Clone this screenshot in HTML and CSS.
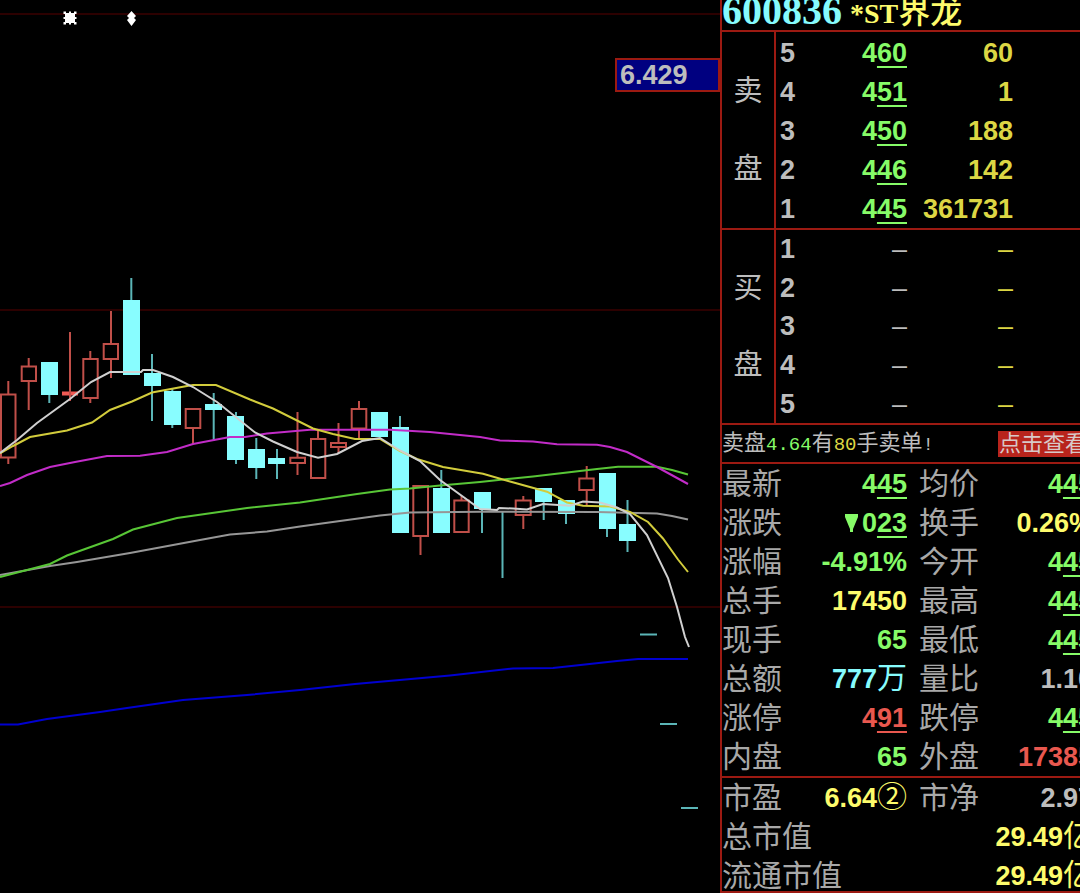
FILE: index.html
```html
<!DOCTYPE html>
<html lang="zh-CN">
<head>
<meta charset="utf-8">
<title>600836 *ST界龙</title>
<link rel="stylesheet" href="styles.css">
</head>
<body>
<main class="terminal">
  <section class="chart" aria-label="K线图">
    <svg class="plot" viewBox="0 0 720 893" preserveAspectRatio="none">
      <path class="grid" d="M0 14H720M0 310H720M0 607H720"/>
      <g class="mark">
        <rect x="65" y="13" width="10" height="10"/>
        <path d="M63.500 11.500h2.500v2.500h-2.500zM74 11.500h2.500v2.500h-2.500zM63.500 22h2.500v2.500h-2.500zM74 22h2.500v2.500h-2.500zM69 11.500h2v13h-2zM63.500 17h13v2h-13z"/>
        <path d="M131.500 11l4.500 5-2 2 2 2-4.500 6-4.500-6 2-2-2-2z"/>
      </g>
      <g class="up">
        <path d="M1 394.500H15.500V457.500H1zM8.300 381V394M8.300 458V464"/>
        <path d="M21.700 366.500H36V381H21.700zM28.700 358V366M28.700 382V410"/>
        <path class="flat" d="M62 393.500H78"/><path d="M70 332V401"/>
        <path d="M83.300 359H97.700V398H83.300zM90.300 351V358M90.300 399V403"/>
        <path d="M103.700 344H118V359H103.700zM111 311V343M111 360V378"/>
        <path d="M185.700 409H200.300V428H185.700zM193 429V444"/>
        <path d="M290.300 457.700H305V463H290.300zM297.500 412V457M297.500 464V475"/>
        <path d="M311 439H325.300V478H311zM318 430V438"/>
        <path d="M331 443H346V447H331zM338.500 423V442M338.500 448V453"/>
        <path d="M351.700 409H366.300V428.500H351.700zM359 401V408M359 429V438"/>
        <path d="M413.300 486H428V536H413.300zM420.500 537V555"/>
        <path d="M454.300 500.500H468.700V532H454.300zM461.500 496V500"/>
        <path d="M515.700 500.500H530.700V515H515.700zM523.300 496V500M523.300 516V529"/>
        <path d="M579.300 478.500H593.700V490H579.300zM586.700 466V478M586.700 491V505"/>
      </g>
      <path class="wick" d="M49.300 390V403M131.300 278V310M152 354V421M172.300 388V428M213.700 393V441M236 412V464M256.300 438V479M277 449V479M400 416V430M441.300 470V490M482 505V533M502.500 512V578M543.700 500V520M566 510V524M607 525V537M627.500 500V552M640 634.500H657M660 724H677M681 808H698"/>
      <path class="down" d="M41 362h17v33h-17zM123 300h17v75h-17zM144 373h17v13h-17zM164 391h17v34h-17zM205 404h17v6h-17zM227 416h17v44h-17zM248 449h17v19h-17zM268 458h17v6h-17zM371 412h17v25h-17zM392 427h17v106h-17zM433 488h17v45h-17zM474 492h17v17h-17zM535 488h17v14h-17zM558 500h17v14h-17zM599 473h17v56h-17zM619 524h17v17h-17z"/>
      <g class="average">
        <polyline class="ma-blue" points="0,724.500 18,724.500 47,719 100,712 127,708 183,700 247,695 300,690 355,684 450,675.500 513,668.500 553,668 617,661 638,659 688,659"/>
        <polyline class="ma-gray" points="0,575 50,566 77,562 130,553 200,540 230,534.500 267,531.500 300,526.500 380,515.500 410,512.500 480,511.700 597,512 657,513.500 672,516 688,519.500"/>
        <polyline class="ma-green" points="0,577 50,564 67,555.500 113,539 133,529.500 177,518 247,508 300,502.500 357,494 390,489.500 410,488.500 440,485.500 480,482 513,478.500 533,476.500 597,469 618,466.700 657,466.700 672,470 688,474.500"/>
        <polyline class="ma-magenta" points="0,486 10,483 27,475 50,467 75,462 107,456 140,455.700 167,452 193,444 210,440.700 230,437 245,437 267,433.500 310,429.700 390,429.700 430,432 480,437 500,440.500 533,441.500 557,444.300 597,444.700 610,447 627,452 657,467 688,484"/>
        <polyline class="ma-yellow" points="0,453.500 13,446 30,437 67,430.500 92,422.500 110,410 132,401.500 152,392.500 187,386 193,385 216,385 250,399.500 273,408.500 313,428.500 333,434 355,439 380,439 400,451 417,459 443,467 483,473.700 510,481.500 547,491.700 567,502.500 583,505.700 610,506.500 630,512 648,522 663,538.500 678,559.500 688,572"/>
        <polyline class="ma-white" points="0,453 17,440 37,423 70,399 91,382 110,372 141,372 143,370 153,370 173,377 193,387 217,402 255,432.500 273,441.500 297,452 318,457.700 337,454 362,441 380,438 400,450.500 420,461 440,480 480,509 497,510 499,508 513,508.500 527,509.500 543,504 570,505.700 583,501.500 600,502.500 617,507.500 630,514 647,535 668,578 677,607 685,637 689,647"/>
      </g>
    </svg>
    <output class="price-tag">6.429</output>
  </section>

  <aside class="quote">
    <h1 class="title"><span class="code">600836</span><span class="name"><span class="latin">*ST</span>界龙</span></h1>

    <section class="book asks" aria-label="卖盘">
      <div class="side"><span class="first">卖</span><span class="second">盘</span></div>
      <table class="levels">
        <tbody>
          <tr><th scope="row">5</th><td class="price green">4<u>60</u></td><td class="volume">60</td></tr>
          <tr><th scope="row">4</th><td class="price green">4<u>51</u></td><td class="volume">1</td></tr>
          <tr><th scope="row">3</th><td class="price green">4<u>50</u></td><td class="volume">188</td></tr>
          <tr><th scope="row">2</th><td class="price green">4<u>46</u></td><td class="volume">142</td></tr>
          <tr><th scope="row">1</th><td class="price green">4<u>45</u></td><td class="volume">361731</td></tr>
        </tbody>
      </table>
    </section>

    <section class="book" aria-label="买盘">
      <div class="side"><span class="first">买</span><span class="second">盘</span></div>
      <table class="levels empty">
        <tbody>
          <tr><th scope="row">1</th><td class="price">–</td><td class="volume">–</td></tr>
          <tr><th scope="row">2</th><td class="price">–</td><td class="volume">–</td></tr>
          <tr><th scope="row">3</th><td class="price">–</td><td class="volume">–</td></tr>
          <tr><th scope="row">4</th><td class="price">–</td><td class="volume">–</td></tr>
          <tr><th scope="row">5</th><td class="price">–</td><td class="volume">–</td></tr>
        </tbody>
      </table>
    </section>

    <section class="notice">
      <p class="message">卖盘<span class="mono green">4.64</span>有<span class="mono amber">80</span>手卖单<span class="mono">!</span></p>
      <a class="view" href="#orders">点击查看</a>
    </section>

    <dl class="stats">
      <div class="stat"><dt>最新</dt><dd class="green">4<u>45</u></dd></div>
      <div class="stat"><dt>均价</dt><dd class="green">4<u>45</u></dd></div>
      <div class="stat"><dt>涨跌</dt><dd class="green"><svg class="fall" viewBox="0 0 13 18"><path d="M0 0H13V3L8 15V18H5V15L0 3z"/></svg>0<u>23</u></dd></div>
      <div class="stat"><dt>换手</dt><dd class="yellow">0.26%</dd></div>
      <div class="stat"><dt>涨幅</dt><dd class="green">-4.91%</dd></div>
      <div class="stat"><dt>今开</dt><dd class="green">4<u>45</u></dd></div>
      <div class="stat"><dt>总手</dt><dd class="yellow">17450</dd></div>
      <div class="stat"><dt>最高</dt><dd class="green">4<u>45</u></dd></div>
      <div class="stat"><dt>现手</dt><dd class="green">65</dd></div>
      <div class="stat"><dt>最低</dt><dd class="green">4<u>45</u></dd></div>
      <div class="stat"><dt>总额</dt><dd class="cyan">777<span class="unit">万</span></dd></div>
      <div class="stat"><dt>量比</dt><dd>1.10</dd></div>
      <div class="stat"><dt>涨停</dt><dd class="red">4<u>91</u></dd></div>
      <div class="stat"><dt>跌停</dt><dd class="green">4<u>45</u></dd></div>
      <div class="stat"><dt>内盘</dt><dd class="green">65</dd></div>
      <div class="stat"><dt>外盘</dt><dd class="red">17385</dd></div>
    </dl>

    <dl class="stats valuation">
      <div class="stat"><dt>市盈</dt><dd class="yellow">6.64<span class="unit">②</span></dd></div>
      <div class="stat"><dt>市净</dt><dd>2.97</dd></div>
      <div class="stat wide"><dt>总市值</dt><dd class="yellow">29.49<span class="unit">亿</span></dd></div>
      <div class="stat wide"><dt>流通市值</dt><dd class="yellow">29.49<span class="unit">亿</span></dd></div>
    </dl>
  </aside>
</main>
</body>
</html>
```

FILE: styles.css
```css
:root {
  --line: #9c1a12;
  --silver: #bdbdbd;
  --green: #86fb68;
  --yellow: #fdfb6c;
  --amber: #dcd644;
  --cyan: #86fbfd;
  --red: #e9584f;
  --text: "Liberation Sans", "Noto Sans CJK SC", sans-serif;
}

* {
  box-sizing: border-box;
}

body {
  margin: 0;
  background: #000;
  color: var(--silver);
  font: bold 27px/30px var(--text);
  overflow: hidden;
}

.terminal {
  display: grid;
  grid-template-columns: 2fr 1fr;
  height: 100vh;
}

/* Chart */
.chart {
  position: relative;
  min-width: 0;
}

.plot {
  display: block;
  width: 100%;
  height: 100vh;
}

.plot path,
.plot polyline {
  fill: none;
  stroke-width: 2;
}

.plot .grid { stroke: #2c0000; }
.plot .mark rect,
.plot .mark path { fill: #fff; }
.plot .up path { stroke: #c04f49; }
.plot .up .flat { stroke: #f05a54; stroke-width: 4; }
.plot .wick { stroke: #5bb5b7; }
.plot .down { fill: #88fdff; }
.ma-blue { stroke: #0000d0; }
.ma-gray { stroke: #969696; }
.ma-green { stroke: #58c636; }
.ma-magenta { stroke: #c22cc8; }
.ma-yellow { stroke: #d2cc3c; }
.ma-white { stroke: #d0d0d0; }

.price-tag {
  position: absolute;
  top: 58px;
  right: 0;
  width: 105px;
  padding: 0 3px;
  border: 2px solid var(--line);
  background: #000080;
}

/* Quote panel */
.quote {
  display: grid;
  grid-template-rows:
    minmax(0, 32fr) minmax(0, 198fr) minmax(0, 195fr)
    minmax(0, 39fr) minmax(0, 314fr) minmax(0, 115fr);
  min-width: 0;
  height: 100vh;
  overflow: hidden;
  border-left: 2px solid var(--line);
}

.quote > * {
  margin: 0;
  border-bottom: 2px solid var(--line);
}

.title {
  display: flex;
  align-items: flex-start;
  gap: 8px;
  white-space: nowrap;
}

.code {
  color: var(--cyan);
  font: bold 40px/22px "Liberation Serif", serif;
}

.name {
  color: var(--yellow);
  font: 500 32px/24px var(--text);
}

.latin {
  font: bold 28px/24px "Liberation Serif", serif;
}

.book {
  display: grid;
  grid-template-columns: 54px 1fr;
}

.asks .levels {
  margin-top: 1px;
}

.side {
  display: grid;
  grid-template-rows: repeat(5, 1fr);
  place-items: center;
  border-right: 2px solid var(--line);
  font: 400 29px/30px var(--text);
}

.first { grid-row: 2; }
.second { grid-row: 4; }

.levels {
  width: 237px;
  height: 100%;
  table-layout: fixed;
  border-collapse: collapse;
}

.levels th,
.levels td {
  padding: 0;
  text-align: right;
}

.levels th {
  width: 30px;
  padding-left: 4px;
  text-align: left;
}

.price { width: 101px; }
.volume { color: var(--amber); }
.empty td { font-weight: normal; }

u {
  text-decoration: underline 2px;
  text-underline-offset: 4px;
  text-decoration-skip-ink: none;
}

.notice {
  display: grid;
  grid-template-columns: 276px auto;
  align-items: center;
  font: 400 22px/26px var(--text);
  white-space: nowrap;
}

.message {
  margin: 0;
}

.mono {
  font: 19px/26px "Liberation Mono", monospace;
}

.view {
  padding: 0 1px;
  background: #b8241c;
  color: #d8c8c8;
  text-decoration: none;
}

.stats {
  display: grid;
  grid-template-columns: 185px 174px;
  grid-auto-rows: 1fr;
  column-gap: 12px;
}

.valuation {
  grid-auto-rows: 39px;
}

.stat {
  display: flex;
  align-items: center;
  justify-content: space-between;
  white-space: nowrap;
}

.wide {
  grid-column: 1 / -1;
}

.stat dt,
.unit {
  font: 400 30px/30px var(--text);
}

.stat dt {
  color: #a8a8a8;
}

.stat dd {
  margin: 0;
}

.fall {
  width: 13px;
  height: 18px;
  margin-right: 4px;
  fill: currentColor;
}

.green { color: var(--green); }
.yellow { color: var(--yellow); }
.amber { color: var(--amber); }
.cyan { color: var(--cyan); }
.red { color: var(--red); }
```
